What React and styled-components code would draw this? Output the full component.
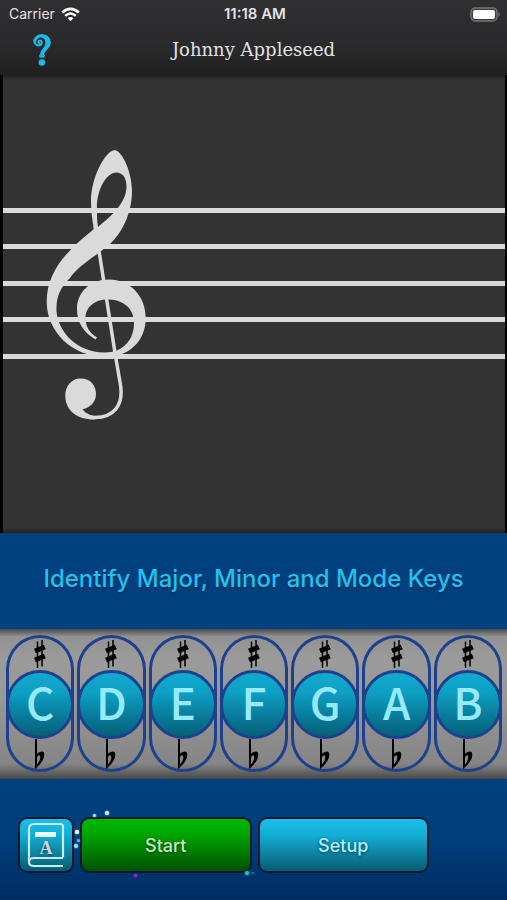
import React from 'react';
import styled, { createGlobalStyle, css } from 'styled-components';

const GlobalStyle = createGlobalStyle`
  * { box-sizing: border-box; }
  body {
    margin: 0;
    background: #00407f;
    font-family: Inter, "Liberation Sans", sans-serif;
  }
  button { font: inherit; padding: 0; border: 0; background: none; cursor: pointer; }
  svg { display: block; }
`;

const Screen = styled.main`
  display: flex;
  flex-direction: column;
  min-height: 100vh;
`;

const Header = styled.header`
  height: 75px;
  color: #e2e2e4;
  background: linear-gradient(#2f2f31, #2a2a2c 60%, #202021);
`;

const StatusBar = styled.div`
  display: grid;
  grid-template-columns: 1fr auto 1fr;
  align-items: center;
  height: 28px;
  padding: 0 6px 0 9px;
  font-size: 14px;
  line-height: 28px;
`;

const Carrier = styled.div`
  display: flex;
  align-items: center;
  gap: 6px;
`;

const Clock = styled.time`
  font-size: 15px;
  font-weight: 600;
`;

const BatterySlot = styled.div`
  justify-self: end;
`;

const TitleBar = styled.div`
  display: grid;
  grid-template-columns: 54px 1fr 54px;
  align-items: center;
  height: 44px;
`;

const HelpButton = styled.button`
  display: flex;
  justify-content: flex-end;
`;

const PlayerName = styled.h1`
  margin: 0;
  text-align: center;
  font: 400 18px/24px "DejaVu Serif", serif;
`;

const StaffPanel = styled.section`
  flex: 1;
  display: flex;
  flex-direction: column;
  justify-content: center;
  min-height: 330px;
  padding-bottom: 42px;
  border: solid #000;
  border-width: 0 2px 0 3px;
  background: linear-gradient(#1f1f20, #333 5px, #333 calc(100% - 5px), #222);
`;

const Staff = styled.div`
  position: relative;
  display: flex;
  flex-direction: column;
  justify-content: space-between;
  height: 151px;
`;

const StaffLine = styled.div`
  height: 5px;
  background: #dadada;
`;

const ClefLayer = styled.div`
  position: absolute;
  left: 37px;
  top: -67px;
`;

const Prompt = styled.section`
  display: flex;
  align-items: center;
  justify-content: center;
  height: 96px;
  padding-bottom: 5px;
  background: #00407f;
`;

const PromptText = styled.h2`
  margin: 0;
  color: #1fc3ee;
  font-size: 24px;
  font-weight: 500;
  line-height: 32px;
  text-align: center;
  text-shadow: 0 2px 2px #002c5c;
`;

const Keyboard = styled.section`
  display: grid;
  grid-template-columns: repeat(7, 1fr);
  gap: 3px;
  height: 150px;
  padding: 6px 5px 7px 6px;
  background: linear-gradient(#4a4a4c, #929292 5%, #9b9b9b 20%, #989898 45%, #858585 90%, #494949);
`;

const Key = styled.div`
  display: flex;
  flex-direction: column;
  border-radius: 35px;
  box-shadow: inset 0 0 0 3px #1e418d;
`;

const AccidentalButton = styled.button`
  flex: 1;
  display: flex;
  justify-content: center;
  align-items: ${({ $kind }) => ($kind === 'sharp' ? 'flex-end' : 'flex-start')};
  padding-bottom: ${({ $kind }) => ($kind === 'sharp' ? '2px' : '0')};
`;

const NoteButton = styled.button`
  display: flex;
  align-items: center;
  justify-content: center;
  aspect-ratio: 1;
  padding-bottom: 7px;
  border: 3px solid #1e418d;
  border-radius: 50%;
  color: #97e9fd;
  background: linear-gradient(#13a9d0, #0da0c5 30%, #087a98 70%, #066078);
  font: 500 44px/44px "Noto Sans CJK JP", "Liberation Sans", sans-serif;
`;

const Actions = styled.footer`
  position: relative;
  display: flex;
  gap: 6px;
  height: 121px;
  padding: 38px 78px 0 18px;
  background: linear-gradient(#00407f, #003e7c 50%, #002c60);
`;

const tones = {
  green: css`
    color: #c4ecc0;
    background: linear-gradient(#00b800, #00a000 35%, #005000);
    text-shadow: 0 1px 3px #033c03;
  `,
  blue: css`
    color: #b6ebf9;
    background: linear-gradient(#19bfe9, #12aed6 30%, #075c70);
    text-shadow: 0 1px 3px #034457;
  `,
};

const ActionButton = styled.button`
  display: flex;
  align-items: center;
  justify-content: center;
  flex: ${({ $square }) => ($square ? '0 0 56px' : '1')};
  height: 56px;
  border: 2px solid #03182f;
  border-radius: 9px;
  font-size: 18px;
  font-weight: 500;
  ${({ $tone }) => tones[$tone]}
`;

const Spark = styled.i`
  position: absolute;
  left: ${({ $x }) => $x}px;
  top: ${({ $y }) => $y}px;
  width: ${({ $size }) => $size}px;
  height: ${({ $size }) => $size}px;
  border-radius: 50%;
  background: ${({ $color }) => $color};
  box-shadow: 0 0 2px ${({ $color }) => $color};
`;

const WifiIcon = () => (
  <svg width="19" height="15" viewBox="0 0 19 15" fill="none" stroke="#fff" aria-hidden="true">
    <path d="M1.2 5.6Q9.500 -2 17.800 5.600" strokeWidth="2.700" />
    <path d="M4.200 8.900Q9.500 4 14.800 8.900" strokeWidth="2.500" />
    <path d="M6.500 11.200Q9.500 8.700 12.500 11.200L9.500 14.200Z" fill="#fff" stroke="none" />
  </svg>
);

const BatteryIcon = () => (
  <svg width="31" height="15" viewBox="0 0 31 15" aria-hidden="true">
    <rect x="1" y="1" width="26" height="13" rx="4" fill="#3b3b3d" stroke="#777779" strokeWidth="1.300" />
    <rect x="3" y="3" width="22" height="9" rx="2" fill="#fff" />
    <path d="M28.500 5Q31 7.500 28.500 10Z" fill="#858587" />
  </svg>
);

const HelpIcon = () => (
  <svg width="24" height="36" viewBox="0 0 24 36" fill="none" stroke="#1bbbe9" strokeLinecap="round" aria-hidden="true">
    <path d="M9.300 11.300C7.600 10.500 8.600 8.200 10.500 8.700C13.200 9.600 11.500 13.700 8.300 13.400C4.800 13 3.900 9.800 4.800 7.500" strokeWidth="2" />
    <path d="M4.800 8.500C6 5.300 8.600 3.700 11.900 3.700" strokeWidth="3" />
    <path d="M11 2.200C17 1.600 20.800 5.500 20.700 10.400C20.600 17 14.200 17.800 13.900 23.500H10.300C9.300 17.500 15.700 16 15.400 10.400C15.200 7 13.300 5.200 10.800 5.200Z" fill="#1bbbe9" stroke="none" />
    <path d="M9 22.500Q12 24.500 15 22.500L14.600 25.500H9.400Z" fill="#1bbbe9" stroke="none" />
    <circle cx="11.900" cy="30.500" r="3.300" fill="#1bbbe9" stroke="none" />
  </svg>
);

const TrebleClef = () => (
  <svg width="112" height="284" viewBox="40 141 112 284" fill="#dadada" role="img" aria-label="Treble clef">
    <path
      fillRule="evenodd"
      d="M114.500 150C123 151 132 174 132 191C132 214 121 234 110 244L98 253.500C86 262 76 269 70 278C60 288 56 297 56.500 311C58 332 77 352 104 352.500C122 353 134 341 134 323C134 308 123 300 109 299.500C95 299 85 307 85.500 319C86 328 90 333 97 337.500L95.500 339.500C83 332 77 322 77 309C77 292 90 279.500 109 279.500C130 279.500 145.700 296 145.700 318C145.700 342 128 357.500 104 357C72 356 47 332 46.700 302C46.500 281 57 263 71.500 249C79 241 87 235 94 229C92 220 91 210 91 201C91 179 104 152 114.500 150ZM117 172.500C106 172 96 191 97 210C97 216 97 222 98 227C110 217 126 204 126.500 187C126.500 178 123 173 117 172.500Z"
    />
    <path d="M95 226L99.500 254L115.500 356L120 382C125 407 112 417.500 95 417.500C87 417.500 81 412 80 408" fill="none" stroke="#dadada" strokeWidth="3.500" />
    <path d="M80 378.500C90 378 96 385 96 394C96 403 89 408 81 410C86 415 91 416.500 96 416.500L95 419.500C78 420 65.500 411 65.300 396C65 386 72 378.500 80 378.500Z" />
  </svg>
);

const SharpIcon = () => (
  <svg width="12" height="28" viewBox="0 0 12 28" fill="none" stroke="#000" aria-hidden="true">
    <path d="M3.500 1.500V28M8 0V26.500" strokeWidth="1.500" />
    <path d="M1 11L10.800 7M1 20L10.800 16" strokeWidth="5" />
  </svg>
);

const FlatIcon = () => (
  <svg width="12" height="31" viewBox="0 0 12 31" fill="#000" aria-hidden="true">
    <path
      fillRule="evenodd"
      d="M1 0H3V14.500Q10 10 10.300 15.500C10.200 21.500 6.500 25 1 30ZM3 18V25.500C5.500 23 6.500 19.500 6.200 17.500Q5.200 15 3 18Z"
    />
  </svg>
);

const BookIcon = () => (
  <svg width="40" height="46" viewBox="0 0 40 46" fill="none" stroke="#c5ecf8" strokeWidth="2.200" aria-hidden="true">
    <path d="M37 35.500V4.500Q37 2 34 2H8Q3 2 3 7V40Q3 44 8 44H37M37 36H8Q3 36 3 40" strokeLinejoin="round" />
    <path d="M9 12.500H30" stroke="#ecfbff" strokeWidth="5" />
    <text x="20" y="32" textAnchor="middle" fill="#cfd4d5" stroke="none" fontFamily="Liberation Serif, serif" fontWeight="700" fontSize="18">A</text>
  </svg>
);

const notes = ['C', 'D', 'E', 'F', 'G', 'A', 'B'];

const sparks = [
  { x: 93, y: 35, size: 3, color: '#b5e0fa' },
  { x: 105, y: 32, size: 4, color: '#d5f0ff' },
  { x: 75, y: 51, size: 4, color: '#ffffff' },
  { x: 77, y: 60, size: 3, color: '#7ba9cf' },
  { x: 74, y: 65, size: 4, color: '#9bdcf6' },
  { x: 134, y: 95, size: 3, color: '#b81ad2' },
  { x: 245, y: 92, size: 4, color: '#15c9d0' },
  { x: 252, y: 93, size: 2, color: '#168ba6' },
];

export default function App() {
  return (
    <>
      <GlobalStyle />
      <Screen>
        <Header>
          <StatusBar>
            <Carrier>Carrier<WifiIcon /></Carrier>
            <Clock>11:18 AM</Clock>
            <BatterySlot><BatteryIcon /></BatterySlot>
          </StatusBar>
          <TitleBar>
            <HelpButton type="button" aria-label="Help"><HelpIcon /></HelpButton>
            <PlayerName>Johnny Appleseed</PlayerName>
          </TitleBar>
        </Header>
        <StaffPanel>
          <Staff>
            {[1, 2, 3, 4, 5].map((n) => <StaffLine key={n} />)}
            <ClefLayer><TrebleClef /></ClefLayer>
          </Staff>
        </StaffPanel>
        <Prompt>
          <PromptText>Identify Major, Minor and Mode Keys</PromptText>
        </Prompt>
        <Keyboard aria-label="Notes">
          {notes.map((note) => (
            <Key key={note}>
              <AccidentalButton type="button" $kind="sharp" aria-label={`${note} sharp`}><SharpIcon /></AccidentalButton>
              <NoteButton type="button">{note}</NoteButton>
              <AccidentalButton type="button" $kind="flat" aria-label={`${note} flat`}><FlatIcon /></AccidentalButton>
            </Key>
          ))}
        </Keyboard>
        <Actions>
          <ActionButton type="button" $tone="blue" $square aria-label="Reference book"><BookIcon /></ActionButton>
          <ActionButton type="button" $tone="green">Start</ActionButton>
          <ActionButton type="button" $tone="blue">Setup</ActionButton>
          {sparks.map((s) => (
            <Spark key={`${s.x}-${s.y}`} $x={s.x} $y={s.y} $size={s.size} $color={s.color} />
          ))}
        </Actions>
      </Screen>
    </>
  );
}
